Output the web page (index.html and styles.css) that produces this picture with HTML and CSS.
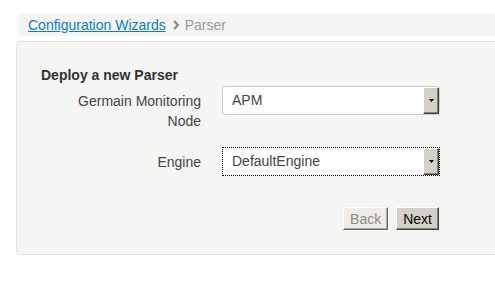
FILE: index.html
```html
<!DOCTYPE html>
<html>
<head>
  <meta charset="UTF-8">
  <title>Deploy a new Parser</title>
  <link rel="stylesheet" href="styles.css">
</head>
<body>
  <div class="page">
    <!-- breadcrumb -->
    <div class="crumbs">
      <a href="#" class="crumb-link">Configuration Wizards</a>
      <svg class="crumb-sep" width="7" height="10" viewBox="0 0 7 10"><path d="M1.2 1l3.6 4-3.6 4" fill="none" stroke="#8c8c8c" stroke-width="2.4"/></svg>
      <span class="crumb-current">Parser</span>
    </div>

    <!-- wizard panel -->
    <div class="panel">
      <h2 class="panel-title">Deploy a new Parser</h2>

      <div class="form-row">
        <label class="form-label">Germain Monitoring Node</label>
        <div class="select rounded">
          <span class="select-value">APM</span>
          <span class="select-btn"><svg width="5" height="3" viewBox="0 0 5 3"><path d="M0 0h5L2.5 3z" fill="#000"/></svg></span>
        </div>
      </div>

      <div class="form-row">
        <label class="form-label">Engine</label>
        <div class="select focused">
          <span class="select-value">DefaultEngine</span>
          <span class="select-btn"><svg width="5" height="3" viewBox="0 0 5 3"><path d="M0 0h5L2.5 3z" fill="#000"/></svg></span>
        </div>
      </div>

      <div class="actions">
        <button class="btn" disabled>Back</button>
        <button class="btn">Next</button>
      </div>
    </div>
  </div>
</body>
</html>
```

FILE: styles.css
```css
html, body {
  margin: 0;
  overflow: hidden;
  background: #fff;
}
body {
  font-family: "Liberation Sans", Arial, sans-serif;
  font-size: 14px;
  color: #444;
}
.page {
  padding-top: 13px;
}
/* bar and panel continue past the right edge of the window */
.crumbs {
  display: flex;
  align-items: center;
  height: 23px;
  margin-left: 18px;
  padding-left: 10px;
  background: #f5f5f4;
  border-radius: 4px 0 0 4px;
}
.crumb-link {
  color: #0a7dc6;
  text-decoration: underline;
}
.crumb-sep {
  margin: 0 5px 0 7px;
}
.crumb-current {
  color: #999;
}
.panel {
  margin: 5px 0 0 16px;
  padding: 25px 0 24px 24px;
  background: #f5f5f4;
  border: 1px solid #e6dfdf;
  border-right: 0;
  border-radius: 5px 0 0 5px;
}
.panel-title {
  margin: 0 0 3px;
  font-size: 14px;
  line-height: 16px;
  font-weight: bold;
  color: #333;
}
.form-row {
  display: grid;
  grid-template-columns: 160px 218px;
  column-gap: 21px;
  align-items: start;
  margin-bottom: 16px;
}
.form-label {
  padding: 6px 0 0 25px;
  text-align: right;
  line-height: 19.6px;
}
.select {
  display: flex;
  height: 29px;
  box-sizing: border-box;
  background: #fff;
}
.select.rounded {
  border: 1px solid #ccc;
  border-radius: 4px;
}
.select.focused {
  border: 1px dotted #000;
}
.select-value {
  flex: 1;
  padding-left: 9px;
  line-height: 27px;
  color: #444;
}
.select-btn {
  width: 16px;
  display: flex;
  align-items: center;
  justify-content: center;
  box-sizing: border-box;
  background: #d4d0c8;
  border: 1px solid;
  border-color: #fff #404040 #404040 #fff;
  box-shadow: inset -1px -1px #808080;
}
.actions {
  display: flex;
  justify-content: flex-end;
  gap: 8px;
  width: 398px;
  margin-top: 31px;
}
.btn {
  height: 23px;
  padding: 0 6px;
  font-family: "Liberation Sans", Arial, sans-serif;
  font-size: 14px;
  color: #000;
  background: #d4d0c8;
  border: 1px solid;
  border-color: #fff #404040 #404040 #fff;
  box-shadow: inset -1px -1px #808080;
  border-radius: 0;
}
.btn:disabled {
  color: #8a8a8a;
  background: #f0ede8;
  border-color: #fff #6d6b63 #6d6b63 #fff;
  box-shadow: inset -1px -1px #a8a59d;
}
```
